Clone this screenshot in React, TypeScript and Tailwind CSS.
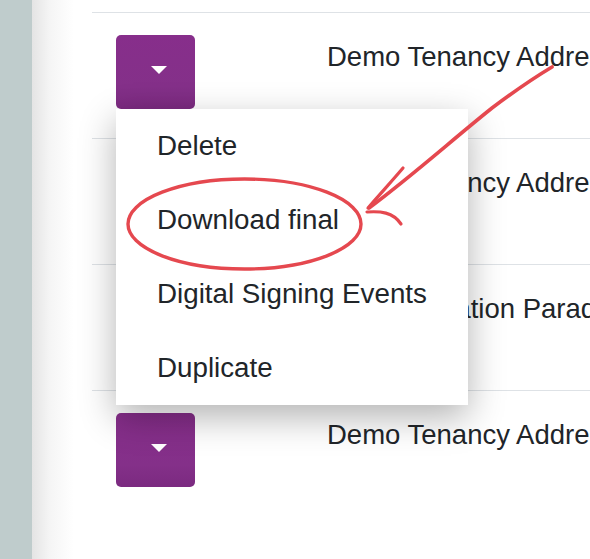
import React from "react";

function CaretButton() {
  return (
    <button className="relative w-[79px] h-[74px] rounded-[5px] bg-[linear-gradient(to_bottom,#872e8b,#843089_70%,#7b2a80)] flex items-center justify-center">
      <svg width="16" height="8" viewBox="0 0 16 8" className="ml-[7px] mt-[-4px]">
        <path d="M0 0 L16 0 L8 8 Z" fill="#ffffff" />
      </svg>
    </button>
  );
}

const rows = [
  "Demo Tenancy Address",
  "Demo Tenancy Address",
  "Flat 1A, Station Parade",
  "Demo Tenancy Address",
];

const items = ["Delete", "Download final", "Digital Signing Events", "Duplicate"];

export default function App() {
  return (
    <div className="relative flex w-[590px] h-[559px] overflow-hidden bg-white font-['Liberation_Sans',Arial,sans-serif] text-[#212529]">
      <div className="w-[32px] shrink-0 bg-[#bfcccc]" />
      <div className="flex-1 pl-[60px] bg-[linear-gradient(to_right,#e4e4e4,#f5f5f5_18px,#ffffff_42px)]">
        <div className="h-[12px]" />
        {rows.map((text, i) => (
          <div key={i} className="flex h-[126px] border-t border-[#dee2e6] bg-white">
            <div className="relative w-[235px] shrink-0 pl-6 pt-[22px]">
              <CaretButton />
              {i === 0 && (
                <div className="absolute left-6 top-[96px] z-10 w-[352px] bg-white shadow-[0_12px_34px_rgba(0,0,0,0.3)]">
                  {items.map((it) => (
                    <div key={it} className="h-[74px] flex items-center pl-[41px] text-[27.75px] leading-none whitespace-nowrap">
                      {it}
                    </div>
                  ))}
                </div>
              )}
            </div>
            <div className="pt-[23px] text-[27.5px] leading-[1.5] whitespace-nowrap">{text}</div>
          </div>
        ))}
      </div>
      <svg className="absolute inset-0 pointer-events-none z-20" width="590" height="559" viewBox="0 0 590 559">
        <g fill="none" stroke="#e5484f" strokeLinecap="round" strokeLinejoin="round">
          <path d="M552 67 C 532 79, 512 93, 492 108 C 452 140, 412 176, 369 208" strokeWidth="3.6" />
          <path d="M368 208 C 380 194, 392 181, 403 168" strokeWidth="3.2" />
          <path d="M367 212 C 380 211, 393 212, 401 224" strokeWidth="3.2" />
          <ellipse cx="244.5" cy="224" rx="116.5" ry="45" strokeWidth="3.4" />
        </g>
      </svg>
    </div>
  );
}
